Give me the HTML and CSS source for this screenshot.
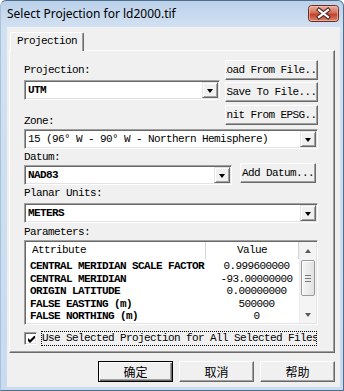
FILE: index.html
```html
<!DOCTYPE html>
<html>
<head>
<meta charset="utf-8">
<title>Select Projection for ld2000.tif</title>
<link rel="stylesheet" href="styles.css">
</head>
<body>
<div class="window">
  <div class="titlebar">
    <span class="title">Select Projection for ld2000.tif</span>
    <button class="close" title="Close">
      <svg width="31" height="17" viewBox="0 0 31 17">
        <defs>
          <linearGradient id="red" x1="0" y1="0" x2="0" y2="1">
            <stop offset="0" stop-color="#eab3a6"/>
            <stop offset="0.45" stop-color="#d4705b"/>
            <stop offset="0.55" stop-color="#c2412a"/>
            <stop offset="1" stop-color="#d98b74"/>
          </linearGradient>
        </defs>
        <rect x="0.5" y="0.5" width="30" height="16" rx="3" fill="url(#red)" stroke="#6e2b20"/>
        <rect x="1.5" y="1.5" width="28" height="14" rx="2" fill="none" stroke="#f3c9bd" stroke-opacity="0.6"/>
        <path d="M11 5 L20 12 M20 5 L11 12" stroke="#4a2a26" stroke-width="4.2" stroke-linecap="square"/>
        <path d="M11 5 L20 12 M20 5 L11 12" stroke="#ffffff" stroke-width="2.2" stroke-linecap="square"/>
      </svg>
    </button>
  </div>

  <div class="client">
    <div class="tabs">
      <div class="tab">Projection</div>
    </div>

    <div class="panel">
      <div class="top">
        <div class="left">
          <div class="label first">Projection:</div>
          <div class="combo">
            <span class="value bold">UTM</span>
            <span class="arrow"></span>
          </div>
          <div class="label zone">Zone:</div>
        </div>
        <div class="side">
          <button class="btn"><span>Load From File...</span></button>
          <button class="btn"><span>Save To File...</span></button>
          <button class="btn"><span>Init From EPSG...</span></button>
        </div>
      </div>

      <div class="combo under">
        <span class="value">15 (96° W - 90° W - Northern Hemisphere)</span>
        <span class="arrow"></span>
      </div>

      <div class="label">Datum:</div>
      <div class="datum-row">
        <div class="combo datum">
          <span class="value bold">NAD83</span>
          <span class="arrow"></span>
        </div>
        <button class="btn add"><span>Add Datum...</span></button>
      </div>

      <div class="label">Planar Units:</div>
      <div class="combo units">
        <span class="value bold">METERS</span>
        <span class="arrow"></span>
      </div>

      <div class="label params">Parameters:</div>
      <div class="list">
        <div class="table">
          <div class="head">
            <span class="col-attr">Attribute</span>
            <span class="col-value">Value</span>
          </div>
          <div class="row"><span class="col-attr">CENTRAL MERIDIAN SCALE FACTOR</span><span class="col-value">0.999600000</span></div>
          <div class="row"><span class="col-attr">CENTRAL MERIDIAN</span><span class="col-value">-93.00000000</span></div>
          <div class="row"><span class="col-attr">ORIGIN LATITUDE</span><span class="col-value">0.00000000</span></div>
          <div class="row"><span class="col-attr">FALSE EASTING (m)</span><span class="col-value">500000</span></div>
          <div class="row"><span class="col-attr">FALSE NORTHING (m)</span><span class="col-value">0</span></div>
        </div>
        <div class="scrollbar">
          <span class="sb-btn up"></span>
          <span class="sb-track">
            <span class="thumb"><span class="grip"></span></span>
          </span>
          <span class="sb-btn down"></span>
        </div>
      </div>

      <div class="check-row">
        <span class="checkbox">
          <svg width="7" height="7" viewBox="0 0 7 7"><path d="M0 2 L2 4 L6 0 L7 0 L7 2 L2 7 L0 5 Z" fill="#000"/></svg>
        </span>
        <span class="check-label">Use Selected Projection for All Selected Files</span>
      </div>
    </div>

    <div class="actions">
      <button class="dlg default">确定</button>
      <button class="dlg">取消</button>
      <button class="dlg">帮助</button>
    </div>
  </div>
</div>
</body>
</html>
```

FILE: styles.css
```css
body {
  margin: 0;
  background: #fff;
}

.window {
  width: 344px;
  height: 391px;
  box-sizing: border-box;
  display: flex;
  flex-direction: column;
  padding: 0 3px 3px 6px;
  background: linear-gradient(#bad1ea, #d2e1f2 26px, #c8dbef);
  border: 1px solid #4f6d8c;
  border-left-color: #a9c2dc;
  border-radius: 6px 6px 0 0;
  font-family: "Liberation Mono", monospace;
  font-size: 11px;
  letter-spacing: -0.6px;
  color: #000;
}

/* title bar */
.titlebar {
  height: 26px;
  display: flex;
  align-items: flex-start;
  flex-shrink: 0;
}

.title {
  font-family: "Noto Sans", sans-serif;
  font-size: 12px;
  letter-spacing: 0;
  line-height: 16px;
  margin-top: 5px;
  color: #000;
}

.close {
  margin: 4px 1px 0 auto;
  padding: 0;
  border: none;
  background: none;
  width: 31px;
  height: 17px;
  display: block;
}

.close svg {
  display: block;
}

/* client area */
.client {
  flex: 1;
  background: #f0f0f0;
  padding-left: 2px;
  display: flex;
  flex-direction: column;
}

.tabs {
  display: flex;
  padding: 5px 0 0 1px;
  height: 18px;
}

.tab {
  position: relative;
  z-index: 1;
  height: 19px;
  box-sizing: border-box;
  padding: 0 6px;
  line-height: 17px;
  background: #f0f0f0;
  border-top: 1px solid #fff;
  border-left: 1px solid #fff;
  border-right: 1px solid #696969;
  box-shadow: inset -1px 0 #a0a0a0;
  border-radius: 2px 2px 0 0;
}

.panel {
  width: 326px;
  box-sizing: border-box;
  padding: 9px 16px 6px 14px;
  border-top: 1px solid #fff;
  border-left: 1px solid #fff;
  border-right: 1px solid #696969;
  border-bottom: 1px solid #696969;
  box-shadow: inset -1px -1px #a0a0a0;
}

.label {
  line-height: 12px;
  height: 12px;
  margin-top: 2px;
  white-space: nowrap;
}

.label.first {
  margin-top: 4px;
}

.label.zone {
  margin-top: 15px;
}

.label.params {
  margin-top: 3px;
}

.bold {
  font-weight: bold;
}

/* layout rows */
.top {
  display: grid;
  grid-template-columns: 196px 93px;
  column-gap: 5px;
  align-items: start;
}

.left .combo {
  margin-top: 4px;
}

.side {
  display: flex;
  flex-direction: column;
}

.side .btn + .btn {
  margin-top: 2px;
}

.side .btn:last-child {
  margin-top: 3px;
}

.under {
  margin-top: 2px;
}

.datum-row {
  display: flex;
  align-items: flex-start;
  gap: 8px;
}

.datum {
  width: 208px;
  margin-top: 2px;
}

.units {
  margin-top: 4px;
}

/* combo box */
.combo {
  height: 20px;
  box-sizing: border-box;
  display: flex;
  align-items: center;
  background: #fff;
  border: 1px solid;
  border-color: #a0a0a0 #fff #fff #a0a0a0;
  box-shadow: inset 1px 1px #696969, inset -1px -1px #e3e3e3;
}

.value {
  flex: 1;
  padding-left: 2px;
  margin-left: 1px;
  white-space: nowrap;
  overflow: hidden;
  line-height: 16px;
}

.arrow {
  width: 16px;
  height: 16px;
  box-sizing: border-box;
  margin-right: 1px;
  background: #f0f0f0;
  border-top: 1px solid #e3e3e3;
  border-left: 1px solid #e3e3e3;
  border-right: 1px solid #696969;
  border-bottom: 1px solid #696969;
  box-shadow: inset 1px 1px #fff, inset -1px -1px #a0a0a0;
  display: flex;
  align-items: center;
  justify-content: center;
}

.arrow::after {
  content: "";
  border-left: 3.5px solid transparent;
  border-right: 3.5px solid transparent;
  border-top: 4px solid #000;
  margin-top: 1px;
}

/* push buttons */
.btn {
  height: 20px;
  box-sizing: border-box;
  padding: 0;
  display: flex;
  align-items: center;
  justify-content: center;
  overflow: hidden;
  white-space: nowrap;
  font: inherit;
  letter-spacing: inherit;
  color: #000;
  background: #f0f0f0;
  border-top: 1px solid #fff;
  border-left: 1px solid #fff;
  border-right: 1px solid #696969;
  border-bottom: 1px solid #696969;
  box-shadow: inset -1px -1px #a0a0a0;
}

.btn span {
  flex-shrink: 0;
}

.add {
  width: 76px;
}

/* list view */
.list {
  margin-top: 2px;
  height: 85px;
  box-sizing: border-box;
  display: flex;
  background: #fff;
  border: 1px solid;
  border-color: #a0a0a0 #fff #fff #a0a0a0;
  box-shadow: inset 1px 1px #696969, inset -1px -1px #e3e3e3;
  padding: 1px;
}

.table {
  flex: 1;
  overflow: hidden;
}

.head {
  display: flex;
  height: 17px;
  line-height: 17px;
  background: #fff;
  border-bottom: 1px solid #fff;
}

.head .col-attr {
  padding-left: 6px;
  border-right: 1px solid #d5d5d5;
  box-sizing: border-box;
}

.head .col-value {
  border-right: 1px solid #d5d5d5;
  box-sizing: border-box;
}

.row {
  display: flex;
  height: 12.5px;
  line-height: 12.5px;
}

.col-attr {
  width: 180px;
  padding-left: 4px;
  white-space: nowrap;
  overflow: hidden;
  flex-shrink: 0;
}

.row .col-attr {
  font-weight: bold;
}

.col-value {
  width: 93px;
  text-align: center;
  white-space: nowrap;
  flex-shrink: 0;
}

.scrollbar {
  width: 17px;
  display: flex;
  flex-direction: column;
  background: #f4f4f4;
  border-left: 1px solid #ececec;
  box-sizing: border-box;
}

.sb-btn {
  height: 17px;
  display: flex;
  align-items: center;
  justify-content: center;
}

.sb-btn.up::after {
  content: "";
  border-left: 3.5px solid transparent;
  border-right: 3.5px solid transparent;
  border-bottom: 4px solid #5a5a5a;
}

.sb-btn.down::after {
  content: "";
  border-left: 3.5px solid transparent;
  border-right: 3.5px solid transparent;
  border-top: 4px solid #5a5a5a;
}

.sb-track {
  flex: 1;
  padding: 1px;
}

.thumb {
  height: 36px;
  box-sizing: border-box;
  display: flex;
  align-items: center;
  justify-content: center;
  border: 1px solid #979797;
  border-radius: 2px;
  background: linear-gradient(to right, #f6f6f6, #e2e2e2);
  box-shadow: inset 1px 1px #fff;
}

.grip {
  width: 6px;
  height: 5px;
  border-top: 1px solid #777;
  border-bottom: 1px solid #777;
  position: relative;
}

.grip::after {
  content: "";
  position: absolute;
  left: 0;
  right: 0;
  top: 2px;
  border-top: 1px solid #777;
}

/* checkbox */
.check-row {
  margin-top: 6px;
  display: flex;
  align-items: center;
  height: 15px;
}

.checkbox {
  width: 13px;
  height: 13px;
  box-sizing: border-box;
  background: #fff;
  border: 1px solid;
  border-color: #a0a0a0 #fff #fff #a0a0a0;
  box-shadow: inset 1px 1px #696969, inset -1px -1px #e3e3e3;
  display: flex;
  align-items: center;
  justify-content: center;
}

.checkbox svg {
  display: block;
  margin: 1px 0 0 1px;
}

.check-label {
  margin-left: 4px;
  width: 276px;
  height: 15px;
  box-sizing: border-box;
  border: 1px dotted #000;
  line-height: 13px;
  white-space: nowrap;
  overflow: hidden;
}

/* dialog buttons */
.actions {
  display: flex;
  justify-content: flex-end;
  gap: 6px;
  margin-top: 8px;
  padding-right: 5px;
}

.dlg {
  width: 75px;
  height: 21px;
  box-sizing: border-box;
  padding: 0;
  font-family: "Noto Sans CJK SC", sans-serif;
  font-size: 12px;
  line-height: 17px;
  color: #000;
  background: #f0f0f0;
  border-top: 1px solid #fff;
  border-left: 1px solid #fff;
  border-right: 1px solid #696969;
  border-bottom: 1px solid #696969;
  box-shadow: inset -1px -1px #a0a0a0;
}

.dlg.default {
  border: 1px solid #000;
  box-shadow: inset 1px 1px #fff, inset -1px -1px #696969, inset -2px -2px #a0a0a0;
}
```
